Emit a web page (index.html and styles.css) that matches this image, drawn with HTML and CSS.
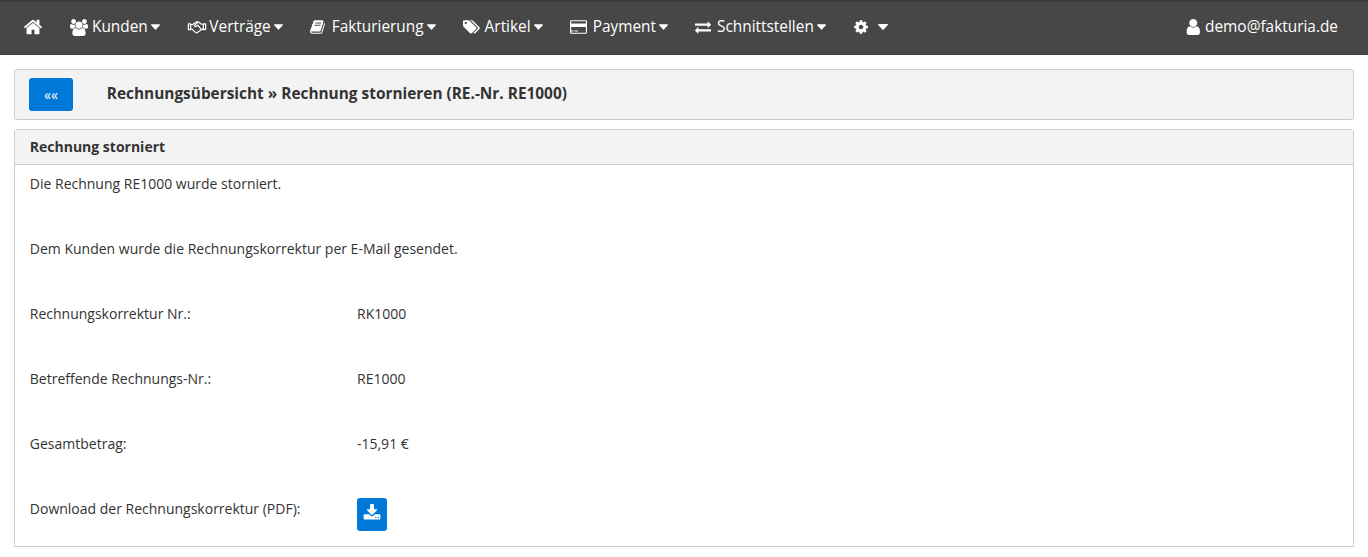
FILE: index.html
```html
<!DOCTYPE html>
<html lang="de">
<head>
<meta charset="utf-8">
<title>Rechnung stornieren</title>
<link rel="stylesheet" href="styles.css">
</head>
<body>
<nav class="topbar">
  <a class="nav-item nav-home"><svg class="ic ic-home" viewBox="0 0 1792 1792"><path d="M1472 992v480q0 26-19 45t-45 19h-384v-384h-256v384h-384q-26 0-45-19t-19-45v-480q0-1 .5-3t.5-3l575-474 575 474q1 2 1 6zm223-69l-62 74q-8 9-21 11h-3q-13 0-21-7l-692-577-692 577q-12 8-24 7-13-2-21-11l-62-74q-8-10-7-23.5t11-21.5l719-599q32-26 76-26t76 26l244 204v-195q0-14 9-23t23-9h192q14 0 23 9t9 23v408l219 182q10 8 11 21.5t-7 23.5z"/></svg></a>
  <a class="nav-item"><svg class="ic ic-users" viewBox="0 0 1920 1792"><path d="M593 896q-162 5-265 128h-134q-82 0-138-40.5t-56-118.5q0-353 124-353 6 0 43.5 21t97.5 42.5 119 21.5q67 0 133-23-5 37-5 66 0 139 81 256zm1071 637q0 120-73 189.5t-194 69.5h-874q-121 0-194-69.5t-73-189.5q0-53 3.5-103.5t14-109 26.5-108.5 43-97.5 62-81 85.5-53.5 111.5-20q10 0 43 21.5t73 48 107 48 135 21.5 135-21.5 107-48 73-48 43-21.5q61 0 111.5 20t85.5 53.5 62 81 43 97.5 26.5 108.5 14 109 3.5 103.5zm-1024-1277q0 106-75 181t-181 75-181-75-75-181 75-181 181-75 181 75 75 181zm704 384q0 159-112.5 271.5t-271.5 112.5-271.5-112.5-112.5-271.5 112.5-271.5 271.5-112.5 271.5 112.5 112.5 271.5zm576 225q0 78-56 118.5t-138 40.5h-134q-103-123-265-128 81-117 81-256 0-29-5-66 66 23 133 23 59 0 119-21.5t97.5-42.5 43.5-21q124 0 124 353zm-128-609q0 106-75 181t-181 75-181-75-75-181 75-181 181-75 181 75 75 181z"/></svg>Kunden<svg class="caret" viewBox="0 0 10 6"><path d="M0 .6Q0 0 .6 0h8.8q.6 0 .6.6 0 .2-.2.4L5.4 5.8q-.4.4-.8 0L.2 1Q0 .8 0 .6z"/></svg></a>
  <a class="nav-item"><svg class="ic ic-hands" viewBox="0 0 20 14" fill="none" stroke="#fff" stroke-width="1.3" stroke-linejoin="round" stroke-linecap="round"><path d="M.7 3.2h2.4v6H.7zM19.3 3.2h-2.4v6h2.4z"/><path d="M3.1 4l2.2-.2L9.4 1q1-.6 2 0l3 2.2 2.5.5M3.1 8.4l1.6.3 3.6 3.6q1 .9 2 .2l4-2.8 2.6-1.5"/><path d="M10.6 1.6L7.5 4.4q-.7.8.2 1.4 1 .5 2-.3l1.2-1 3.6 4.4"/></svg>Verträge<svg class="caret" viewBox="0 0 10 6"><path d="M0 .6Q0 0 .6 0h8.8q.6 0 .6.6 0 .2-.2.4L5.4 5.8q-.4.4-.8 0L.2 1Q0 .8 0 .6z"/></svg></a>
  <a class="nav-item"><svg class="ic ic-book" viewBox="0 0 1664 1792"><path d="M1639 478q40 57 18 129l-275 906q-19 64-76.5 107.5t-122.5 43.5h-923q-77 0-148.5-53.5t-99.5-131.5q-24-67-2-127 0-4 3-27t4-37q1-8-3-21.5t-3-19.5q2-11 8-21t16.5-23.5 16.5-23.5q23-38 45-91.5t30-91.5q3-10 .5-30t-.5-28q3-11 17-28t17-23q21-36 42-92t25-90q1-9-2.5-32t.5-28q4-13 22-30.5t22-22.5q19-26 42.5-84.5t27.5-96.5q1-8-3-25.5t-2-26.5q2-8 9-18t18-23 17-21q8-12 16.5-30.5t15-35 16-36 19.5-32 26.5-23.5 36-11.5 47.5 5.5l-1 3q38-9 51-9h761q74 0 114 56t18 130l-274 906q-36 119-71.5 153.5t-128.5 34.5h-869q-27 0-38 15-11 16-1 43 24 70 144 70h923q29 0 56-15.5t35-41.5l300-987q7-22 5-57 38 15 59 43zm-1064 2q-4 13 2 22.5t20 9.5h608q13 0 25.5-9.5t16.5-22.5l21-64q4-13-2-22.5t-20-9.5h-608q-13 0-25.5 9.5t-16.5 22.5zm-83 256q-4 13 2 22.5t20 9.5h608q13 0 25.5-9.5t16.5-22.5l21-64q4-13-2-22.5t-20-9.5h-608q-13 0-25.5 9.5t-16.5 22.5z"/></svg>Fakturierung<svg class="caret" viewBox="0 0 10 6"><path d="M0 .6Q0 0 .6 0h8.8q.6 0 .6.6 0 .2-.2.4L5.4 5.8q-.4.4-.8 0L.2 1Q0 .8 0 .6z"/></svg></a>
  <a class="nav-item"><svg class="ic ic-tags" viewBox="0 0 1920 1792"><path d="M448 448q0-53-37.5-90.5t-90.5-37.5-90.5 37.5-37.5 90.5 37.5 90.5 90.5 37.5 90.5-37.5 37.5-90.5zm1067 576q0 53-37 90l-491 492q-39 37-91 37-53 0-90-37l-715-716q-38-37-64.5-101t-26.5-117v-416q0-52 38-90t90-38h416q53 0 117 26.5t102 64.5l715 714q37 39 37 91zm384 0q0 53-37 90l-491 492q-39 37-91 37-36 0-59-14t-53-45l470-470q37-37 37-90 0-52-37-91l-715-714q-38-38-102-64.5t-117-26.5h224q53 0 117 26.5t102 64.5l715 714q37 39 37 91z"/></svg>Artikel<svg class="caret" viewBox="0 0 10 6"><path d="M0 .6Q0 0 .6 0h8.8q.6 0 .6.6 0 .2-.2.4L5.4 5.8q-.4.4-.8 0L.2 1Q0 .8 0 .6z"/></svg></a>
  <a class="nav-item"><svg class="ic ic-card" viewBox="0 0 1920 1792"><path d="M1760 128q66 0 113 47t47 113v1216q0 66-47 113t-113 47h-1600q-66 0-113-47t-47-113v-1216q0-66 47-113t113-47h1600zm-1600 128q-13 0-22.5 9.5t-9.5 22.5v224h1664v-224q0-13-9.5-22.5t-22.5-9.5h-1600zm1600 1280q13 0 22.5-9.5t9.5-22.5v-608h-1664v608q0 13 9.5 22.5t22.5 9.5h1600zm-1632-128v-128h256v128h-256zm384 0v-128h384v128h-384z"/></svg>Payment<svg class="caret" viewBox="0 0 10 6"><path d="M0 .6Q0 0 .6 0h8.8q.6 0 .6.6 0 .2-.2.4L5.4 5.8q-.4.4-.8 0L.2 1Q0 .8 0 .6z"/></svg></a>
  <a class="nav-item"><svg class="ic ic-swap" viewBox="0 0 1792 1792"><path d="M1792 1184v192q0 13-9.5 22.5t-22.5 9.5h-1376v192q0 13-9.5 22.5t-22.5 9.5q-12 0-24-10l-319-320q-9-9-9-22 0-14 9-23l320-320q9-9 23-9 13 0 22.5 9.5t9.5 22.5v192h1376q13 0 22.5 9.5t9.5 22.5zm0-544q0 14-9 23l-320 320q-9 9-23 9-13 0-22.5-9.5t-9.5-22.5v-192h-1376q-13 0-22.5-9.5t-9.5-22.5v-192q0-13 9.5-22.5t22.5-9.5h1376v-192q0-14 9-23t23-9q12 0 24 10l319 319q9 9 9 23z"/></svg>Schnittstellen<svg class="caret" viewBox="0 0 10 6"><path d="M0 .6Q0 0 .6 0h8.8q.6 0 .6.6 0 .2-.2.4L5.4 5.8q-.4.4-.8 0L.2 1Q0 .8 0 .6z"/></svg></a>
  <a class="nav-item"><svg class="ic ic-cog" viewBox="0 0 1792 1792"><path d="M1152 896q0-106-75-181t-181-75-181 75-75 181 75 181 181 75 181-75 75-181zm512-109v222q0 12-8 23t-20 13l-185 28q-19 54-39 91 35 50 107 138 10 12 10 25t-9 23q-27 37-99 108t-94 71q-12 0-26-9l-138-108q-44 23-91 38-16 136-29 186-7 28-36 28h-222q-14 0-24.5-8.5t-11.5-21.5l-28-184q-49-16-90-37l-141 107q-10 9-25 9-14 0-25-11-126-114-165-168-7-10-7-23 0-12 8-23 15-21 51-66.5t54-70.5q-27-50-41-99l-183-27q-13-2-21-12.5t-8-23.5v-222q0-12 8-23t19-13l186-28q14-46 39-92-40-57-107-138-10-12-10-24 0-10 9-23 26-36 98.5-107.5t94.5-71.5q13 0 26 10l138 107q44-23 91-38 16-136 29-186 7-28 36-28h222q14 0 24.5 8.5t11.5 21.5l28 184q49 16 90 37l142-107q9-9 24-9 13 0 25 10 129 119 165 170 7 8 7 22 0 12-8 23-15 21-51 66.5t-54 70.5q26 50 41 98l183 28q13 2 21 12.5t8 23.5z"/></svg><svg class="caret caret-cog" viewBox="0 0 10 6"><path d="M0 .6Q0 0 .6 0h8.8q.6 0 .6.6 0 .2-.2.4L5.4 5.8q-.4.4-.8 0L.2 1Q0 .8 0 .6z"/></svg></a>
  <a class="nav-item nav-user"><svg class="ic ic-user" viewBox="200 128 1340 1536"><path d="M1536 1399q0 109-62.5 187t-150.5 78h-854q-88 0-150.5-78t-62.5-187q0-85 8.5-160.5t31.5-152 58.5-131 94-89 134.5-34.5q131 128 313 128t313-128q76 0 134.5 34.5t94 89 58.5 131 31.5 152 8.5 160.5zm-256-887q0 159-112.5 271.5t-271.5 112.5-271.5-112.5-112.5-271.5 112.5-271.5 271.5-112.5 271.5 112.5 112.5 271.5z"/></svg>demo@fakturia.de</a>
</nav>
<main class="page">
  <header class="titlebar">
    <a class="btn btn-back">««</a>
    <h1 class="title">Rechnungsübersicht » Rechnung stornieren (RE.-Nr. RE1000)</h1>
  </header>
  <section class="panel">
    <h2 class="panel-head">Rechnung storniert</h2>
    <div class="panel-body">
      <p class="row">Die Rechnung RE1000 wurde storniert.</p>
      <p class="row">Dem Kunden wurde die Rechnungskorrektur per E-Mail gesendet.</p>
      <div class="row row-pair"><span>Rechnungskorrektur Nr.:</span><span>RK1000</span></div>
      <div class="row row-pair"><span>Betreffende Rechnungs-Nr.:</span><span>RE1000</span></div>
      <div class="row row-pair"><span>Gesamtbetrag:</span><span>-15,91 €</span></div>
      <div class="row row-pair row-last"><span>Download der Rechnungskorrektur (PDF):</span><a class="btn btn-dl"><svg class="ic-dl" viewBox="0 0 1792 1792"><path d="M1344 1344q0-26-19-45t-45-19-45 19-19 45 19 45 45 19 45-19 19-45zm256 0q0-26-19-45t-45-19-45 19-19 45 19 45 45 19 45-19 19-45zm128-224v320q0 40-28 68t-68 28h-1472q-40 0-68-28t-28-68v-320q0-40 28-68t68-28h465l135 136q58 56 136 56t136-56l136-136h464q40 0 68 28t28 68zm-325-569q17 41-14 70l-448 448q-18 19-45 19t-45-19l-448-448q-31-29-14-70 17-39 59-39h256v-448q0-26 19-45t45-19h256q26 0 45 19t19 45v448h256q42 0 59 39z"/></svg></a></div>
    </div>
  </section>
</main>
</body>
</html>
```
FILE: styles.css
```css
* { box-sizing: border-box; }
html, body { margin: 0; padding: 0; }
body {
  font-family: "Open Sans", "Liberation Sans", sans-serif;
  font-size: 14px;
  line-height: 20px;
  color: #333;
  background: #fff;
}
.topbar {
  display: flex;
  align-items: center;
  height: 55px;
  padding: 0 30px 2px 23px;
  background: #474747;
  border-top: 2px solid #3c3c3c;
  border-bottom: 1px solid #3c3c3c;
  color: #fff;
  font-size: 15.4px;
}
.nav-item {
  display: flex;
  align-items: center;
  margin-right: 27px;
  white-space: nowrap;
}
.nav-user { margin: 0 0 0 auto; }
.ic { display: block; fill: #fff; flex: none; }
.ic-hands { fill: none; }
.ic-home { width: 20px; height: 20px; }
.ic-users { width: 18px; height: 17px; margin-right: 4px; }
.ic-hands { width: 20px; height: 13px; margin-right: 2.5px; }
.ic-book { width: 15px; height: 16px; margin-right: 7px; }
.ic-tags { width: 17px; height: 16px; margin-right: 5px; }
.ic-card { width: 17px; height: 16px; margin-right: 6px; }
.ic-swap { width: 16px; height: 16px; margin-right: 6px; }
.ic-cog { width: 16px; height: 16px; }
.ic-user { width: 14px; height: 16px; margin-right: 5px; }
.caret { display: block; width: 9px; height: 6px; margin-left: 3px; fill: #fff; }
.caret-cog { margin-left: 9px; width: 10px; }
.page { padding: 14px 14px 0; }
.titlebar {
  display: flex;
  align-items: center;
  height: 51px;
  padding: 0 14px 0;
  background: #f3f3f3;
  border: 1px solid #ccc;
  border-radius: 3px;
}
.btn {
  display: flex;
  align-items: center;
  justify-content: center;
  background: #0078d7;
  color: #fff;
  border-radius: 3px;
}
.btn-back { width: 44px; height: 33px; font-size: 14px; }
.title {
  margin: 0 0 1px 33.8px;
  font-size: 15.4px;
  font-weight: 700;
  line-height: 20px;
}
.panel {
  margin-top: 9px;
  height: 418px;
  border: 1px solid #ccc;
  border-radius: 3px 3px 0 0;
}
.panel-head {
  margin: 0;
  height: 35px;
  padding: 7px 14.8px;
  font-size: 14px;
  font-weight: 700;
  line-height: 20px;
  background: #f3f3f3;
  border-bottom: 1px solid #ccc;
}
.panel-body { padding: 9px 14.8px 0; }
.row { margin: 0; height: 65px; }
.row-pair { display: grid; grid-template-columns: 327.2px 1fr; align-items: start; }
.row-last { height: 33px; }
.btn-dl { width: 30px; height: 33px; margin-top: -1px; }
.ic-dl { width: 18px; height: 18px; margin-bottom: 3px; fill: #fff; display: block; }
```
